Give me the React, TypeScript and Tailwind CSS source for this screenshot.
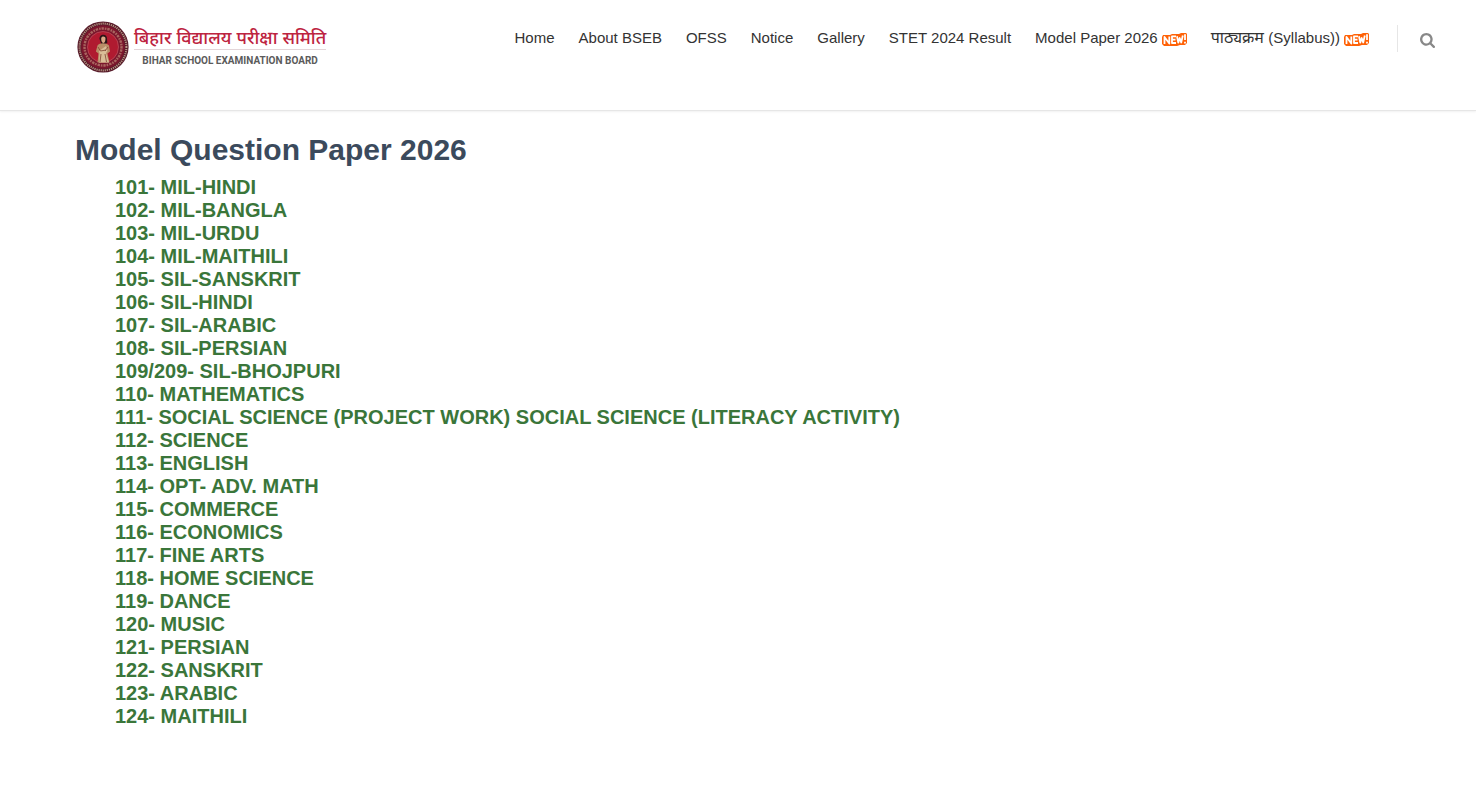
const navItems = [
  { label: 'Home' },
  { label: 'About BSEB' },
  { label: 'OFSS' },
  { label: 'Notice' },
  { label: 'Gallery' },
  { label: 'STET 2024 Result' },
  { label: 'Model Paper 2026', isNew: true },
  { hindi: 'पाठ्यक्रम', label: '(Syllabus))', isNew: true },
];

const papers = [
  '101- MIL-HINDI',
  '102- MIL-BANGLA',
  '103- MIL-URDU',
  '104- MIL-MAITHILI',
  '105- SIL-SANSKRIT',
  '106- SIL-HINDI',
  '107- SIL-ARABIC',
  '108- SIL-PERSIAN',
  '109/209- SIL-BHOJPURI',
  '110- MATHEMATICS',
  '111- SOCIAL SCIENCE (PROJECT WORK) SOCIAL SCIENCE (LITERACY ACTIVITY)',
  '112- SCIENCE',
  '113- ENGLISH',
  '114- OPT- ADV. MATH',
  '115- COMMERCE',
  '116- ECONOMICS',
  '117- FINE ARTS',
  '118- HOME SCIENCE',
  '119- DANCE',
  '120- MUSIC',
  '121- PERSIAN',
  '122- SANSKRIT',
  '123- ARABIC',
  '124- MAITHILI',
];

function Emblem() {
  return (
    <svg viewBox="0 0 52 52" className="size-[52px] shrink-0" aria-hidden="true">
      <circle cx="26" cy="26" r="25.6" fill="#581c2b" />
      <circle cx="26" cy="26" r="23.4" fill="none" stroke="#b99a86" strokeWidth="2" strokeDasharray="1.1 1" />
      <circle cx="26" cy="26" r="21.8" fill="#7a162c" />
      <circle cx="26" cy="26" r="18.500" fill="none" stroke="#a8665f" strokeWidth="2.4" strokeDasharray="1.6 0.9 2.4 1" />
      <circle cx="26" cy="26" r="15.500" fill="#b01a30" stroke="#c4606a" strokeWidth="0.6" />
      <path d="M22.500 18c-.5-5.500 8-6 7.500 0l.3 4-2 1h-4z" fill="#2c1517" />
      <path d="M24.200 17c.5-2.300 4.300-2 4.300.4 0 2.300-.8 4.600-2.200 4.600s-2.300-2.300-2.100-5z" fill="#dba886" />
      <path d="M20.500 24.500c2-3 9-3 11.500 0l1 6-2.500 2 2 9h-12l1-9-2.600-2z" fill="#b98e68" />
      <path d="M22 30l7-5 1.500 5-1.500 2 3 9.500h-10l.5-9z" fill="#d9bd98" />
      <path d="M21 26l2.500 4 5.500-1M31 26l-3 4M24 33l-1 8M28 33l1.500 8" fill="none" stroke="#7e4431" strokeWidth="0.8" />
    </svg>
  );
}

function NewBadge() {
  return (
    <svg viewBox="0 0 25 14" className="ml-1 inline-block h-[14px] w-[25px] align-[-3px]" role="img" aria-label="New">
      <path d="M1 3h7l2-1h7l2-1h5l1 1v9l-2 2h-5l-3 1H2l-2-2V5z" fill="#ff6207" />
      <path
        d="M2.500 12V5L7.300 11.500V4.500M14 4.300H10V11H14M10 7.700H13.500M15 4.300L16.300 10.500L17.700 6L19.200 10.500L20.800 3.500M23 2.200V8M23 9.700V11.500"
        fill="none"
        stroke="#fff"
        strokeWidth="1.800"
        strokeLinejoin="round"
      />
    </svg>
  );
}

function SearchIcon() {
  return (
    <svg viewBox="64 128 1664 1664" className="size-[15px]" fill="#888" aria-hidden="true">
      <path d="M1216 832q0-185-131.500-316.500t-316.500-131.500-316.500 131.500-131.500 316.500 131.500 316.500 316.500 131.500 316.500-131.500 131.500-316.500zm512 832q0 52-38 90t-90 38q-54 0-90-38l-343-342q-179 124-399 124-143 0-273.500-55.500t-225-150-150-225-55.500-273.500 55.500-273.500 150-225 225-150 273.500-55.500 273.500 55.500 225 150 150 225 55.500 273.500q0 220-124 399l343 343q37 37 37 90z" />
    </svg>
  );
}

export default function App() {
  return (
    <div className="min-h-screen bg-white font-['Liberation_Sans','Noto_Sans_Devanagari','Noto_Sans',sans-serif]">
      <header className="flex items-start justify-between border-b border-[#e6e6e6] pr-[41px] pb-[37px] pl-[77px] shadow-[0_1px_2px_rgba(0,0,0,0.06)]">
        <a href="#home" className="mt-[21px] flex items-center gap-[5px]">
          <Emblem />
          <span className="flex flex-col items-center">
            <span className="border-b border-[#e3d5d8] pt-1 text-[18px] leading-[22px] font-medium whitespace-nowrap text-[#bd2440]">
              बिहार विद्यालय परीक्षा समिति
            </span>
            <span className="font-[Roboto,sans-serif] text-[10px] leading-[22px] font-bold whitespace-nowrap text-[#5b5b5b]">
              BIHAR SCHOOL EXAMINATION BOARD
            </span>
          </span>
        </a>
        <div className="mt-[25px] flex items-start">
          <nav className="flex gap-6 text-[15px] leading-[26px] text-[#333]">
            {navItems.map((item) => (
              <a key={item.label} href="#" className="whitespace-nowrap">
                {item.hindi && <span className="text-[16px]">{item.hindi} </span>}
                {item.label}
                {item.isNew && <NewBadge />}
              </a>
            ))}
          </nav>
          <button type="button" aria-label="Search" className="ml-7 flex h-[27px] items-center border-l border-[#e6e6e6] pt-1 pl-[22px]">
            <SearchIcon />
          </button>
        </div>
      </header>
      <main className="px-[75px] pt-[21px]">
        <h1 className="text-[30px] leading-9 font-bold text-[#3b4a5c]">Model Question Paper 2026</h1>
        <ul className="mt-2 pl-10 text-[20px] leading-[23px] font-bold text-[#3a763a]">
          {papers.map((paper) => (
            <li key={paper}>
              <a href="#">{paper}</a>
            </li>
          ))}
        </ul>
      </main>
    </div>
  );
}
